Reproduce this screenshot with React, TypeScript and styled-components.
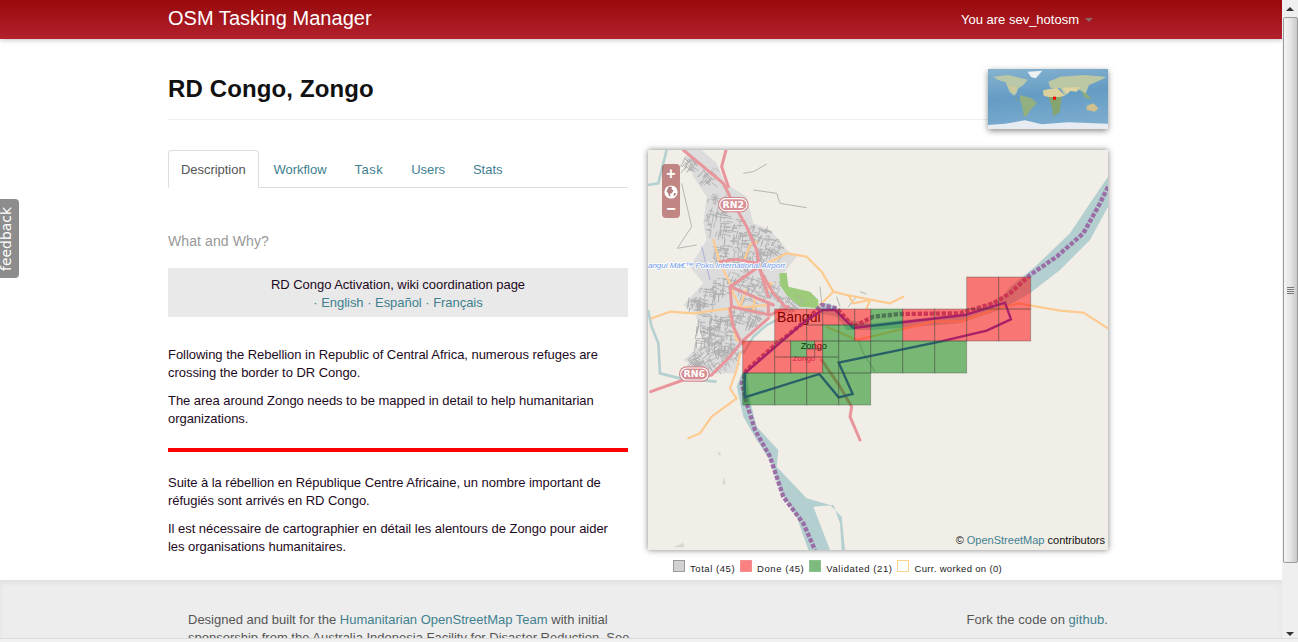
import { createGlobalStyle, styled } from "styled-components"

const LINK = "#41808f"

const GlobalStyle = createGlobalStyle`
  html, body {
    margin: 0;
    padding: 0;
    height: 100%;
    overflow: hidden;
    background: #fff;
  }
  body {
    font-family: "Liberation Sans", Arial, sans-serif;
    font-size: 13px;
    line-height: 18px;
    letter-spacing: -0.04px;
    color: #1d0a1d;
  }
`

const Frame = styled.div`
  position: relative;
  display: flex;
  width: 1298px;
  height: 642px;
  overflow: hidden;
`

const Page = styled.div`
  width: 1282px;
  height: 642px;
  overflow: hidden;
  flex: none;
`

const Navbar = styled.header`
  height: 39px;
  background: linear-gradient(to bottom, #980a0b, #b2212d);
  box-shadow: 0 1px 5px rgba(0, 0, 0, 0.25);
  padding: 0 189px 0 168px;
  display: flex;
  align-items: center;
  justify-content: space-between;
  color: #fff;
`

const Brand = styled.div`
  font-size: 20px;
  line-height: 36px;
  margin-top: -3px;
  letter-spacing: 0.03px;
`

const UserMenu = styled.div`
  display: flex;
  align-items: center;
  gap: 6px;
  font-size: 13px;
  letter-spacing: 0;
`

const Caret = styled.span`
  width: 0;
  height: 0;
  border-left: 4px solid transparent;
  border-right: 4px solid transparent;
  border-top: 4px solid #8d6668;
`

const Container = styled.main`
  width: 940px;
  margin-left: 168px;
`

const Header = styled.div`
  height: 80px;
  border-bottom: 1px solid #eee;
  display: flex;
  justify-content: space-between;
  margin-bottom: 30px;
`

const Title = styled.h1`
  margin: 35px 0 0;
  font-size: 24px;
  line-height: 30px;
  font-weight: bold;
  letter-spacing: 0.13px;
  color: #111;
`

const Thumb = styled.svg`
  display: block;
  width: 120px;
  height: 60px;
  margin-top: 30px;
  box-shadow: 0 2px 6px rgba(0, 0, 0, 0.45);
`

const Columns = styled.div`
  display: grid;
  grid-template-columns: 460px 460px;
  column-gap: 20px;
`

const Tabs = styled.nav`
  display: flex;
  height: 37px;
  border-bottom: 1px solid #ddd;
  color: ${LINK};
`

const Tab = styled.div<{ $active?: boolean; $track?: number }>`
  height: 38px;
  box-sizing: border-box;
  padding: 10px 12px 0;
  margin-right: 2px;
  border: 1px solid ${(p) => (p.$active ? "#ddd" : "transparent")};
  border-bottom-color: ${(p) => (p.$active ? "#fff" : "transparent")};
  border-radius: 4px 4px 0 0;
  background: ${(p) => (p.$active ? "#fff" : "transparent")};
  color: ${(p) => (p.$active ? "#555" : LINK)};
  letter-spacing: ${(p) => p.$track ?? -0.04}px;
`

const Section = styled.h4`
  margin: 43px 0 17px;
  font-size: 14px;
  line-height: 20px;
  font-weight: normal;
  letter-spacing: 0.1px;
  color: #999;
`

const Notice = styled.div`
  height: 49px;
  box-sizing: border-box;
  padding: 8px 0 0;
  background: #e9e9e9;
  text-align: center;
  margin-bottom: 29px;
`

const Link = styled.span`
  color: ${LINK};
`

const Para = styled.p`
  margin: 0 0 10px;
`

const RedRule = styled.div`
  height: 4px;
  background: #f00;
  margin: 20px 0 22px;
`

const MapColumn = styled.div`
  display: flex;
  flex-direction: column;
`

const MapPanel = styled.div`
  position: relative;
  width: 460px;
  height: 400px;
  background: #f1eee8;
  box-shadow: 0 0 6px rgba(0, 0, 0, 0.5);
  overflow: hidden;
`

const MapSvg = styled.svg`
  display: block;
  width: 460px;
  height: 400px;
`

const ZoomBar = styled.div`
  position: absolute;
  left: 14px;
  top: 14px;
  width: 18px;
  height: 54px;
  padding: 2px 0 1px;
  box-sizing: border-box;
  border-radius: 4px;
  background: rgba(140, 20, 20, 0.48);
  color: #fff;
  display: flex;
  flex-direction: column;
  align-items: center;
  justify-content: space-between;
  font-weight: bold;
  font-size: 16px;
  line-height: 16px;
`

const Attribution = styled.div`
  position: absolute;
  right: 3px;
  bottom: 3px;
  font-size: 11px;
  line-height: 14px;
  letter-spacing: 0;
  color: #111;
  background: rgba(241, 238, 232, 0.6);
`

const Legend = styled.div`
  display: flex;
  align-items: flex-start;
  margin: 10px 0 0 25px;
  font-size: 9.5px;
  line-height: 12px;
  color: #222;
`

const LegendItem = styled.div`
  display: flex;
  margin-right: 5px;
`

const Swatch = styled.span<{ $fill: string; $edge: string }>`
  width: 12px;
  height: 12px;
  box-sizing: border-box;
  margin-right: 5px;
  background: ${(p) => p.$fill};
  border: 1px solid ${(p) => p.$edge};
`

const LegendLabel = styled.span<{ $track?: number }>`
  margin-top: 3px;
  letter-spacing: ${(p) => p.$track ?? 0.55}px;
`

const Footer = styled.footer`
  height: 62px;
  margin-top: 5px;
  padding: 31px 174px 0 188px;
  box-sizing: border-box;
  background: #ededed;
  box-shadow: inset 0 3px 5px rgba(0, 0, 0, 0.05);
  display: flex;
  justify-content: space-between;
  color: #555;
  overflow: hidden;
  letter-spacing: 0;
`

const FooterText = styled.div`
  width: 460px;
  flex: none;
`

const ForkText = styled.div`
  letter-spacing: 0.05px;
`

const Feedback = styled.div`
  position: absolute;
  left: 0;
  top: 199px;
  width: 19px;
  height: 79px;
  border-radius: 0 4px 4px 0;
  background: #8d8d8d;
  color: #fff;
  overflow: hidden;
  display: flex;
  align-items: center;
  justify-content: center;
`

const FeedbackText = styled.span`
  display: block;
  transform: rotate(-90deg);
  white-space: nowrap;
  font-family: "DejaVu Sans", sans-serif;
  font-size: 14px;
  margin-left: -8px;
`

const Scrollbar = styled.aside`
  width: 16px;
  height: 642px;
  flex: none;
  background: #efefef;
  display: flex;
  flex-direction: column;
  align-items: center;
`

const ArrowBox = styled.div`
  width: 16px;
  height: 17px;
  flex: none;
  display: flex;
  align-items: center;
  justify-content: center;
`

const Arrow = styled.span<{ $down?: boolean }>`
  width: 0;
  height: 0;
  border-left: 4px solid transparent;
  border-right: 4px solid transparent;
  ${(p) => (p.$down ? "border-top: 4px solid #333;" : "border-bottom: 4px solid #333;")}
`

const Thumbbar = styled.div`
  width: 15px;
  height: 546px;
  margin-left: 1px;
  box-sizing: border-box;
  border: 1px solid #9b9b9b;
  border-radius: 2px;
  background: linear-gradient(to right, #f4f4f4, #e4e4e4 50%, #c9c9c9);
  display: flex;
  align-items: center;
  justify-content: center;
`

const Grip = styled.div`
  width: 7px;
  height: 7px;
  background: repeating-linear-gradient(to bottom, #777 0 1px, #e8e8e8 1px 2px);
`

const Spacer = styled.div`
  flex: 1;
`

const BottomEdge = styled.div`
  position: absolute;
  left: 0;
  bottom: 0;
  width: 100%;
  height: 3px;
  background: #f1f1f1;
  border-top: 1px solid #dcdcdc;
`

// all map drawing is in the 3x crop's coordinates, the viewBox scales it back
const col = (i: number) => 308 + i * 96
const row = (i: number) => 411 + i * 96
const RED = "rgba(255,0,0,0.5)"
const GREEN = "rgba(0,128,0,0.5)"

type Cell = [number, number, number, string]
const CELLS: Cell[] = [
  // x index, y index, size in cells
  [7, 0, 1, RED], [8, 0, 1, RED],
  [1, 1, 1, RED], [4, 1, 1, GREEN], [5, 1, 1, RED], [6, 1, 1, RED], [7, 1, 1, RED], [8, 1, 1, RED],
  [2, 1, 0.5, RED], [2.5, 1, 0.5, RED], [3, 1, 0.5, RED], [3.5, 1, 0.5, RED],
  [2, 1.5, 0.5, RED], [2.5, 1.5, 0.5, GREEN], [3, 1.5, 0.5, GREEN], [3.5, 1.5, 0.5, RED],
  [0, 2, 1, RED], [1, 2, 0.5, RED], [1.5, 2, 0.5, GREEN], [2, 2, 0.25, GREEN], [2, 2.25, 0.25, RED],
  [2.25, 2, 0.25, RED], [2.25, 2.25, 0.25, RED],
  [1, 2.5, 0.5, RED], [1.5, 2.5, 0.5, RED], [2, 2.5, 0.5, RED],
  [2.5, 2, 0.5, GREEN], [2.5, 2.5, 0.5, GREEN], [3, 2, 1, GREEN], [4, 2, 1, GREEN], [5, 2, 1, GREEN], [6, 2, 1, GREEN],
  [0, 3, 1, GREEN], [1, 3, 1, GREEN], [2, 3, 1, GREEN], [3, 3, 1, GREEN],
]

// street clusters along the town: x, y, spread, angle
const CLUSTERS: [number, number, number, number][] = [
  [150, 65, 22, 40], [205, 105, 22, 40], [235, 190, 30, 15], [225, 250, 32, 10], [270, 270, 34, 5],
  [310, 300, 30, 10], [360, 280, 26, 20], [400, 320, 26, 25], [240, 340, 26, 5], [300, 360, 26, 0],
  [350, 350, 24, 10], [200, 470, 30, 10], [240, 440, 26, 10], [300, 420, 30, 20], [350, 430, 28, 25],
  [400, 450, 26, 30], [440, 490, 22, 30], [200, 545, 30, 5], [190, 590, 26, 5], [240, 550, 28, 8],
  [250, 610, 26, 10], [280, 530, 24, 15], [330, 490, 28, 20], [180, 655, 26, -35], [230, 660, 26, -35],
  [270, 640, 22, -35], [165, 490, 20, 10], [340, 540, 18, 20], [215, 620, 22, -35], [160, 670, 18, -35],
]

function streetPath() {
  let seed = 12345
  const rnd = () => {
    seed = (seed * 1103515245 + 12345) % 2147483648
    return seed / 2147483648
  }
  let d = ""
  CLUSTERS.forEach(([cx, cy, spread, angle]) => {
    for (let i = 0; i < 34; i++) {
      const x = cx + (rnd() - 0.5) * spread * 2
      const y = cy + (rnd() - 0.5) * spread * 2
      const len = 7 + rnd() * 20
      const a = ((angle + (i % 2 ? 90 : 0) + (rnd() - 0.5) * 14) * Math.PI) / 180
      d += `M${x.toFixed(1)} ${y.toFixed(1)}l${(Math.cos(a) * len).toFixed(1)} ${(Math.sin(a) * len).toFixed(1)}`
    }
  })
  return d
}

const STREETS = streetPath()

function Shield({ x, y, label }: { x: number; y: number; label: string }) {
  return (
    <g>
      <rect x={x - 46} y={y - 23} width="92" height="46" rx="23" fill="#cf868c" />
      <rect x={x - 41} y={y - 18} width="82" height="36" rx="18" fill="#d68f95" stroke="#fff" strokeWidth="3.5" />
      <text x={x} y={y + 10} textAnchor="middle" fontFamily="DejaVu Sans, sans-serif" fontWeight="bold" fontSize="28" fill="#fff">
        {label}
      </text>
    </g>
  )
}

function MapDrawing() {
  return (
    <MapSvg viewBox="24 30 1380 1200">
      <rect x="24" y="30" width="1380" height="1200" fill="#f1eee8" />

      {/* built up area */}
      <path
        fill="#dcdcdc"
        d="M135 30L185 30L230 70L255 130L320 170L340 250L390 270L450 340L470 350L430 400L460 470L510 500L410 520L330 590L300 630L285 700L210 700L130 660L190 610L165 520L130 495L190 430L150 380L200 300L190 250L200 170L160 110Z"
      />
      <path d={STREETS} fill="none" stroke="#aeaeae" strokeWidth="2.6" />
      <path
        fill="none"
        stroke="#ababab"
        strokeWidth="2.5"
        d="M310 100L340 95L380 72M340 150L410 160L420 190L500 203M125 130L155 260L112 325L170 315M540 440L545 490M660 455L680 462M625 500L650 470M600 500L590 470M655 600L670 640L705 695"
      />
      <path fill="none" stroke="#b8b8d8" strokeWidth="4" d="M185 320L210 420" />

      {/* water */}
      <path
        fill="#b3cfcf"
        d="M1404 110L1350 190L1290 280L1180 385L1110 440L1080 480L980 520L700 550L620 540L570 490L545 490L530 520L590 530L620 570L700 570L960 550L1080 510L1170 460L1260 390L1350 300L1404 200Z"
      />
      <path
        fill="none"
        stroke="#b5d0d0"
        strokeWidth="8"
        d="M430 530L380 555L340 590L310 640M80 30L55 130L24 135M24 510L35 560L55 610L60 700L120 715L230 725"
      />
      <path
        fill="#b3cfcf"
        d="M305 700L290 740L310 830L350 900L390 960L425 1060L470 1130L505 1230L570 1230L520 1100L580 1095L600 1150L605 1230L615 1230L605 1130L570 1095L500 1075L410 980L415 930L350 860L330 780L320 700Z"
      />
      <path fill="#d8d8d0" d="M232 938l8 -2l3 10l-7 0zM250 1010l8 20l-10 6zM100 1222l30 -14l4 14z" />

      {/* roads */}
      <g fill="none" strokeLinejoin="round" strokeLinecap="round">
        <g stroke="#fdcb8f" strokeWidth="6.5">
          <path d="M35 535L90 515L160 520L270 505L385 495" />
          <path d="M385 368L440 340L500 350L545 395L580 455L620 465L750 490L790 470" />
          <path d="M580 455L540 495M625 465L640 490L690 480L680 505M220 300L240 370L270 430" />
          <path d="M315 355L330 315L350 305M275 450L300 500L318 450M265 505L290 600L310 610M345 470L340 510" />
          <path d="M145 895L180 880L215 830L290 775L270 745L290 690L300 640" />
          <path d="M1135 490L1260 512L1330 518L1404 565" />
          <path d="M375 430L395 430L385 445" />
          <path d="M560 560L650 600L880 545L960 545L1060 510L1135 490" />
        </g>
        <g stroke="#e8959b" strokeWidth="9">
          <path d="M130 30L250 130L280 190L320 260L350 330L360 390L400 460L440 505" />
          <path d="M258 30L245 80L265 140" />
          <path d="M32 755L130 720L215 705L270 650L305 605L385 535" />
          <path d="M350 385L270 440L275 500L390 525L445 500M270 440L400 495M240 365L290 358L350 370" />
          <path d="M305 610L280 560L270 505" />
          <path d="M385 525L385 490M360 390L385 470" />
          <path d="M545 660L600 740L635 800L630 830L660 900" />
        </g>
      </g>

      <path fill="#9ccc7a" d="M418 400L440 398L445 440L510 455L535 480L535 505L480 500L440 465L420 435Z" />
      <path fill="none" stroke="#ababab" strokeWidth="2.5" d="M470 470L490 480L475 500" />

      {/* river line */}
      <path
        fill="none"
        stroke="#9b6ea8"
        strokeWidth="13"
        strokeDasharray="13 5"
        d="M1404 140L1380 190L1330 280L1250 350L1170 405L1110 460L1060 490L960 520L780 522L700 530L640 560L590 505L545 495L500 540L400 620L320 690L305 730L320 790L345 870L390 950L430 1070L490 1150L525 1230"
      />

      <Shield x={280} y={194} label="RN2" />
      <Shield x={163} y={702} label="RN6" />

      <text
        x="24"
        y="385"
        fontFamily="Liberation Sans, sans-serif"
        fontStyle="italic"
        fontSize="24"
        fill="#6d97e8"
        stroke="#fff"
        strokeWidth="5"
        paintOrder="stroke"
      >
        angui Mâ€™ Poko International Airport
      </text>

      <text x="411" y="546" fontFamily="Liberation Sans, sans-serif" fontSize="42" fill="#000">
        Bangui
      </text>
      <text x="482" y="628" fontFamily="Liberation Sans, sans-serif" fontSize="28" fill="#000">
        Zongo
      </text>
      <text x="458" y="664" fontFamily="Liberation Sans, sans-serif" fontSize="24" fill="#b04a90">
        Zongo
      </text>

      {/* task outline sits under the grid, the cell colours tint it */}
      <path
        fill="none"
        stroke="#5040d0"
        strokeWidth="7"
        strokeLinejoin="miter"
        d="M314 700L490 548L548 510L585 510L640 564L975 525L1095 488L1113 538L1040 572L900 605L596 668L638 762L596 772L538 702L314 772Z"
      />

      {/* task grid: inner edges get stroked twice so they come out darker */}
      {CELLS.map(([x, y, size, fill]) => (
        <rect
          key={`${x}-${y}`}
          x={col(x)}
          y={row(y)}
          width={size * 96}
          height={size * 96}
          fill={fill}
          stroke="rgba(70,70,70,0.36)"
          strokeWidth="3"
        />
      ))}
    </MapSvg>
  )
}

function WorldThumb() {
  return (
    <Thumb viewBox="9 12 360 180">
      <defs>
        <filter id="soft">
          <feGaussianBlur stdDeviation="1.3" />
        </filter>
        <linearGradient id="sea" x1="0" y1="0" x2="0.2" y2="1">
          <stop offset="0" stopColor="#86b3cf" />
          <stop offset="0.5" stopColor="#659cc4" />
          <stop offset="1" stopColor="#7aabcd" />
        </linearGradient>
      </defs>
      <rect x="9" y="12" width="360" height="180" fill="url(#sea)" />
      <g filter="url(#soft)">
        <path fill="#e6ecf2" d="M9 180L60 176L120 166L170 178L250 172L369 176L369 192L9 192Z" />
        <path fill="#eef1f3" d="M128 20L172 17L152 40L138 36Z" />
        <path fill="#b8c8a8" d="M25 35L70 30L128 44L115 60L100 70L95 84L88 92L74 82L62 52L40 45Z" />
        <path fill="#d3c898" d="M70 62L95 66L90 84L78 76Z" />
        <path fill="#7fa86e" d="M88 92L102 106L96 104Z" />
        <path fill="#92b080" d="M105 90L140 100L156 115L136 135L124 155L116 152L112 125L105 105Z" />
        <path fill="#bcc8a4" d="M190 50L225 35L300 30L365 36L335 50L312 60L302 86L286 76L256 70L240 92L226 70L196 68Z" />
        <path fill="#dcd09c" d="M174 76L216 68L240 92L224 96L190 96L176 92Z" />
        <path fill="#86a470" d="M190 96L230 96L228 115L224 140L205 155L200 122Z" />
        <path fill="#dfd3a0" d="M232 68L282 66L276 80L256 78L246 88Z" />
        <path fill="#8cac7a" d="M288 78L306 88L322 104L300 98Z" />
        <path fill="#cfc08e" d="M305 122L325 115L340 130L330 140L305 135Z" />
      </g>
      <rect x="204" y="95" width="9" height="9" fill="#f00" />
    </Thumb>
  )
}

function GlobeIcon() {
  return (
    <svg width="14" height="14" viewBox="0 0 14 14">
      <circle cx="7" cy="7" r="6.6" fill="#fff" />
      <path fill="#b47f7f" d="M5 1.5L8 2L7.5 4L9.5 5.5L8 8L6 9L6.5 11.5L5 11L4 8L2.5 6.5L3.5 4ZM10 8L12 8L11 11L9.5 10.5Z" />
    </svg>
  )
}

export default function App() {
  return (
    <>
      <GlobalStyle />
      <Frame>
        <Page>
          <Navbar>
            <Brand>OSM Tasking Manager</Brand>
            <UserMenu>
              You are sev_hotosm
              <Caret />
            </UserMenu>
          </Navbar>
          <Container>
            <Header>
              <Title>RD Congo, Zongo</Title>
              <WorldThumb />
            </Header>
            <Columns>
              <div>
                <Tabs>
                  <Tab $active>Description</Tab>
                  <Tab>Workflow</Tab>
                  <Tab $track={0.5}>Task</Tab>
                  <Tab>Users</Tab>
                  <Tab>Stats</Tab>
                </Tabs>
                <Section>What and Why?</Section>
                <Notice>
                  RD Congo Activation, wiki coordination page
                  <br />
                  <Link>· English · Español · Français</Link>
                </Notice>
                <Para>
                  Following the Rebellion in Republic of Central Africa, numerous refuges are crossing the border to DR
                  Congo.
                </Para>
                <Para>The area around Zongo needs to be mapped in detail to help humanitarian organizations.</Para>
                <RedRule />
                <Para>
                  Suite à la rébellion en République Centre Africaine, un nombre important de réfugiés sont arrivés en
                  RD Congo.
                </Para>
                <Para>
                  Il est nécessaire de cartographier en détail les alentours de Zongo pour aider
                  <br />
                  les organisations humanitaires.
                </Para>
              </div>
              <MapColumn>
                <MapPanel>
                  <MapDrawing />
                  <ZoomBar>
                    <span>+</span>
                    <GlobeIcon />
                    <span>−</span>
                  </ZoomBar>
                  <Attribution>
                    © <Link>OpenStreetMap</Link> contributors
                  </Attribution>
                </MapPanel>
                <Legend>
                  <LegendItem>
                    <Swatch $fill="#d2d2d2" $edge="#999" />
                    <LegendLabel>Total (45)</LegendLabel>
                  </LegendItem>
                  <LegendItem>
                    <Swatch $fill="#fb8080" $edge="#f09090" />
                    <LegendLabel>Done (45)</LegendLabel>
                  </LegendItem>
                  <LegendItem>
                    <Swatch $fill="#7dba7d" $edge="#8cc08c" />
                    <LegendLabel>Validated (21)</LegendLabel>
                  </LegendItem>
                  <LegendItem>
                    <Swatch $fill="#fff" $edge="#fdd28c" />
                    <LegendLabel $track={0.33}>Curr. worked on (0)</LegendLabel>
                  </LegendItem>
                </Legend>
              </MapColumn>
            </Columns>
          </Container>
          <Footer>
            <FooterText>
              Designed and built for the <Link>Humanitarian OpenStreetMap Team</Link> with initial sponsorship from the
              Australia Indonesia Facility for Disaster Reduction. See
            </FooterText>
            <ForkText>
              Fork the code on <Link>github</Link>.
            </ForkText>
          </Footer>
        </Page>
        <Scrollbar>
          <ArrowBox>
            <Arrow />
          </ArrowBox>
          <Thumbbar>
            <Grip />
          </Thumbbar>
          <Spacer />
          <ArrowBox>
            <Arrow $down />
          </ArrowBox>
        </Scrollbar>
        <Feedback>
          <FeedbackText>feedback</FeedbackText>
        </Feedback>
        <BottomEdge />
      </Frame>
    </>
  )
}
